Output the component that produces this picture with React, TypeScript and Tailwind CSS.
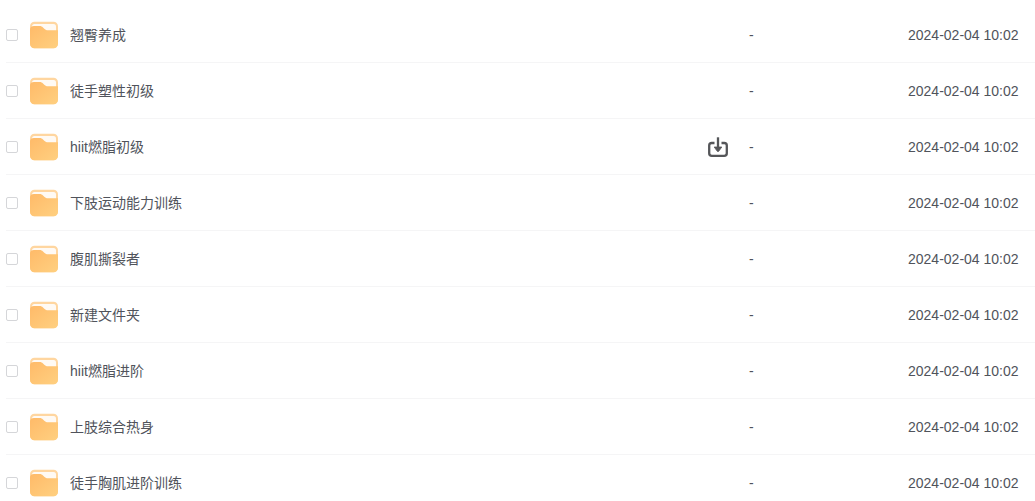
import React from 'react'

type FileItem = {
  id: number;
  name: string;
  size: string;
  updatedAt: string;
  active?: boolean;
};

const files: FileItem[] = [
  { id: 1, name: '翘臀养成', size: '-', updatedAt: '2024-02-04 10:02' },
  { id: 2, name: '徒手塑性初级', size: '-', updatedAt: '2024-02-04 10:02' },
  { id: 3, name: 'hiit燃脂初级', size: '-', updatedAt: '2024-02-04 10:02', active: true },
  { id: 4, name: '下肢运动能力训练', size: '-', updatedAt: '2024-02-04 10:02' },
  { id: 5, name: '腹肌撕裂者', size: '-', updatedAt: '2024-02-04 10:02' },
  { id: 6, name: '新建文件夹', size: '-', updatedAt: '2024-02-04 10:02' },
  { id: 7, name: 'hiit燃脂进阶', size: '-', updatedAt: '2024-02-04 10:02' },
  { id: 8, name: '上肢综合热身', size: '-', updatedAt: '2024-02-04 10:02' },
  { id: 9, name: '徒手胸肌进阶训练', size: '-', updatedAt: '2024-02-04 10:02' },
]

function FolderIcon() {
  return (
    <svg className="h-7 w-7 shrink-0" viewBox="0 0 28 28" aria-hidden="true">
      <defs>
        <linearGradient id="folder-front" x1="0" y1="0" x2="1" y2="1">
          <stop offset="0" stopColor="#ffba69" />
          <stop offset="1" stopColor="#ffd080" />
        </linearGradient>
      </defs>
      <rect x="0" y="0.7" width="28" height="26.6" rx="4.5" fill="#ffd6a0" />
      <rect x="2" y="3" width="24" height="12" rx="2.5" fill="#fffaf4" />
      <path
        d="M0 8.5C0 6.3 1.7 5 4 5h5.5c1.6 0 2.500.5 3.500 1.500l1.600 1.500c1 1 1.900 1.300 3.400 1.300H28v13.500c0 2.500-2 4.500-4.500 4.500h-19C2 27.300 0 25.300 0 22.800z"
        fill="url(#folder-front)"
      />
    </svg>
  )
}

function SaveIcon() {
  return (
    <svg className="h-5 w-5" viewBox="0 0 20 20" fill="none" aria-hidden="true">
      <path
        d="M6.5 6H3.8C2.2 6 1.2 7 1.2 8.6v7.6c0 1.6 1 2.6 2.6 2.6h12.4c1.6 0 2.6-1 2.6-2.6V8.6C18.8 7 17.8 6 16.2 6h-2.7"
        stroke="#555659"
        strokeWidth="2.3"
      />
      <path d="M10 0.3v12" stroke="#555659" strokeWidth="2.3" />
      <path
        d="M6.2 10h7.6l-3.100 4.300q-.7.800-1.400 0z"
        fill="#555659"
        stroke="#555659"
        strokeWidth="0.8"
        strokeLinejoin="round"
      />
    </svg>
  )
}

function FileRow({ file }: { file: FileItem }) {
  const inputId = `file-${file.id}`
  return (
    <tr className="h-14">
      <td className="border-b border-[#f5f5f6] p-0">
        <div className="flex items-center">
          <input
            id={inputId}
            type="checkbox"
            className="h-3 w-3 shrink-0 appearance-none rounded-xs border border-[#d5d6d9] bg-white checked:bg-blue-500"
          />
          <label htmlFor={inputId} className="ml-3 flex items-center gap-3">
            <FolderIcon />
            <span className="truncate">{file.name}</span>
          </label>
        </div>
      </td>
      <td className="border-b border-[#f5f5f6] p-0">
        {file.active && (
          <button type="button" aria-label="保存" className="flex cursor-pointer">
            <SaveIcon />
          </button>
        )}
      </td>
      <td className="border-b border-[#f5f5f6] p-0">{file.size}</td>
      <td className="border-b border-[#f5f5f6] p-0">{file.updatedAt}</td>
    </tr>
  )
}

export default function App() {
  return (
    <main className="h-screen overflow-hidden bg-white pt-[7px] pl-1.5">
      <table className="w-full table-fixed border-separate border-spacing-0 text-left font-['Liberation_Sans','Noto_Sans_CJK_SC',sans-serif] text-sm text-[#50535b]">
        <colgroup>
          <col />
          <col className="w-[41px]" />
          <col className="w-[159px]" />
          <col className="w-[127px]" />
        </colgroup>
        <tbody>
          {files.map((file) => (
            <FileRow key={file.id} file={file} />
          ))}
        </tbody>
      </table>
    </main>
  )
}
